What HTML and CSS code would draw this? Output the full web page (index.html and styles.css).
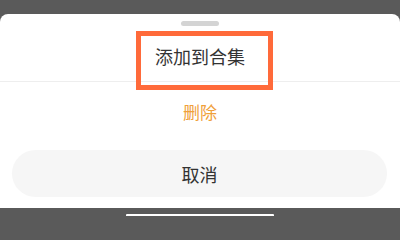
FILE: index.html
```html
<!DOCTYPE html>
<html lang="zh">
<head>
<meta charset="utf-8">
<link rel="stylesheet" href="styles.css">
</head>
<body>
<div class="screen">
  <div class="sheet">
    <div class="handle-row"><div class="handle"></div></div>
    <div class="title">添加到合集</div>
    <div class="option">删除</div>
    <div class="cancel">取消</div>
    <div class="highlight"></div>
  </div>
  <div class="bottom-band"><div class="home-bar"></div></div>
</div>
</body>
</html>
```

FILE: styles.css
```css
html, body {
  margin: 0;
  padding: 0;
}
body {
  width: 400px;
  height: 216px;
  overflow: hidden;
  background: #5a5a5a;
  font-family: "Noto Sans CJK SC", "Noto Sans", sans-serif;
}
.screen {
  display: flex;
  flex-direction: column;
  height: 216px;
  padding-top: 14px;
  box-sizing: border-box;
}
.sheet {
  position: relative;
  background: #ffffff;
  border-radius: 8px 8px 0 0;
  height: 194px;
  display: flex;
  flex-direction: column;
}
.handle-row {
  display: flex;
  justify-content: center;
  padding-top: 7px;
}
.handle {
  width: 38px;
  height: 5px;
  border-radius: 3px;
  background: #d4d4d4;
}
.title {
  height: 56px;
  box-sizing: border-box;
  padding-top: 18px;
  line-height: 24px;
  font-size: 18px;
  color: #333333;
  text-align: center;
  border-bottom: 1px solid #eeeeee;
}
.option {
  height: 58px;
  display: flex;
  align-items: center;
  justify-content: center;
  font-size: 17px;
  color: #f0a03a;
}
.cancel {
  margin: 10px 13px 0 12px;
  height: 47px;
  border-radius: 24px;
  background: #f6f6f6;
  display: flex;
  align-items: center;
  justify-content: center;
  font-size: 18px;
  color: #333333;
}
.highlight {
  position: absolute;
  left: 136px;
  top: 17px;
  width: 137px;
  height: 59px;
  box-sizing: border-box;
  border: 5px solid #ff6a3a;
}
.bottom-band {
  flex: 1;
  display: flex;
  justify-content: center;
  align-items: flex-end;
}
.home-bar {
  width: 148px;
  height: 2px;
  background: #ffffff;
  border-radius: 1px 1px 0 0;
}
```
